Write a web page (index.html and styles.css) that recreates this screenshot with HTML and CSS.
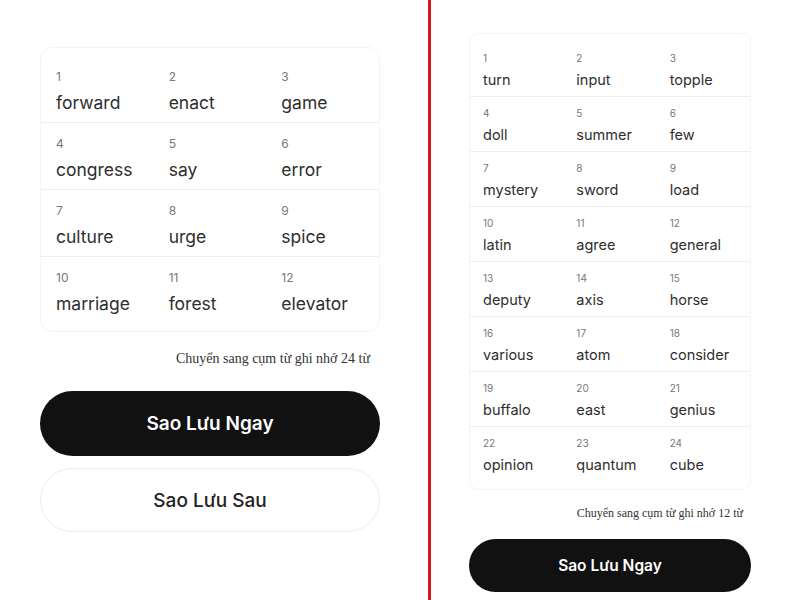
FILE: index.html
```html
<!DOCTYPE html>
<html lang="vi">
<head>
<meta charset="utf-8">
<title>Sao Lưu</title>
<link rel="stylesheet" href="styles.css">
</head>
<body>
<div class="page">
  <section class="panel panel-left">
    <div class="card">
      <div class="row"><div class="cell"><div class="num">1</div><div class="word">forward</div></div><div class="cell"><div class="num">2</div><div class="word">enact</div></div><div class="cell"><div class="num">3</div><div class="word">game</div></div></div>
      <div class="row"><div class="cell"><div class="num">4</div><div class="word">congress</div></div><div class="cell"><div class="num">5</div><div class="word">say</div></div><div class="cell"><div class="num">6</div><div class="word">error</div></div></div>
      <div class="row"><div class="cell"><div class="num">7</div><div class="word">culture</div></div><div class="cell"><div class="num">8</div><div class="word">urge</div></div><div class="cell"><div class="num">9</div><div class="word">spice</div></div></div>
      <div class="row"><div class="cell"><div class="num">10</div><div class="word">marriage</div></div><div class="cell"><div class="num">11</div><div class="word">forest</div></div><div class="cell"><div class="num">12</div><div class="word">elevator</div></div></div>
    </div>
    <div class="switch">Chuyển sang cụm từ ghi nhớ 24 từ</div>
    <button class="btn btn-primary">Sao Lưu Ngay</button>
    <button class="btn btn-secondary">Sao Lưu Sau</button>
  </section>
  <div class="divider"></div>
  <section class="panel panel-right">
    <div class="card">
      <div class="row"><div class="cell"><div class="num">1</div><div class="word">turn</div></div><div class="cell"><div class="num">2</div><div class="word">input</div></div><div class="cell"><div class="num">3</div><div class="word">topple</div></div></div>
      <div class="row"><div class="cell"><div class="num">4</div><div class="word">doll</div></div><div class="cell"><div class="num">5</div><div class="word">summer</div></div><div class="cell"><div class="num">6</div><div class="word">few</div></div></div>
      <div class="row"><div class="cell"><div class="num">7</div><div class="word">mystery</div></div><div class="cell"><div class="num">8</div><div class="word">sword</div></div><div class="cell"><div class="num">9</div><div class="word">load</div></div></div>
      <div class="row"><div class="cell"><div class="num">10</div><div class="word">latin</div></div><div class="cell"><div class="num">11</div><div class="word">agree</div></div><div class="cell"><div class="num">12</div><div class="word">general</div></div></div>
      <div class="row"><div class="cell"><div class="num">13</div><div class="word">deputy</div></div><div class="cell"><div class="num">14</div><div class="word">axis</div></div><div class="cell"><div class="num">15</div><div class="word">horse</div></div></div>
      <div class="row"><div class="cell"><div class="num">16</div><div class="word">various</div></div><div class="cell"><div class="num">17</div><div class="word">atom</div></div><div class="cell"><div class="num">18</div><div class="word">consider</div></div></div>
      <div class="row"><div class="cell"><div class="num">19</div><div class="word">buffalo</div></div><div class="cell"><div class="num">20</div><div class="word">east</div></div><div class="cell"><div class="num">21</div><div class="word">genius</div></div></div>
      <div class="row"><div class="cell"><div class="num">22</div><div class="word">opinion</div></div><div class="cell"><div class="num">23</div><div class="word">quantum</div></div><div class="cell"><div class="num">24</div><div class="word">cube</div></div></div>
    </div>
    <div class="switch">Chuyển sang cụm từ ghi nhớ 12 từ</div>
    <button class="btn btn-primary">Sao Lưu Ngay</button>
  </section>
</div>
</body>
</html>
```
FILE: styles.css
```css
* { box-sizing: border-box; }
html, body { margin: 0; padding: 0; background: #fff; }
body { font-family: Inter, "Noto Sans", Arial, sans-serif; width: 800px; height: 600px; overflow: hidden; }

.page { display: flex; height: 600px; }

.panel { display: flex; flex-direction: column; }

.panel-left { width: 340px; margin-left: 40px; padding-top: 47px; }
.divider { width: 3px; background: #d3171a; margin-left: 48px; height: 600px; }
.panel-right { width: 282px; margin-left: 38px; padding-top: 33px; }

.card {
  border: 1px solid #f4f4f4;
  border-radius: 12px;
  padding: 8px 0;
}
.row {
  display: grid;
  grid-template-columns: 1fr 1fr 1fr;
  border-bottom: 1px solid #eeeeee;
}
.row:last-child { border-bottom: none; }

.num { color: #777; }
.word { color: #2e2e2e; }

.panel-left .row { height: 67px; }
.panel-left .row:last-child { height: 66px; }
.panel-left .cell { padding: 13px 0 0 15px; }
.panel-left .num { font-size: 12px; line-height: 16px; }
.panel-left .word { font-size: 17.5px; line-height: 22px; margin-top: 7px; }

.panel-right .card { border-radius: 10px; }
.panel-right .row { height: 55px; }
.panel-right .row:last-child { height: 54px; }
.panel-right .cell { padding: 9px 0 0 13px; }
.panel-right .num { font-size: 10px; line-height: 14px; }
.panel-right .word { font-size: 14.5px; line-height: 18px; margin-top: 6px; }

.switch {
  font-family: "Liberation Serif", "Times New Roman", serif;
  color: #333;
  text-align: right;
}
.panel-left .switch { font-size: 14px; line-height: 16px; margin-top: 19px; padding-right: 10px; }
.panel-right .switch { font-size: 12px; line-height: 14px; margin-top: 16px; padding-right: 8px; }

.btn {
  display: block;
  width: 100%;
  font-family: Inter, "Noto Sans", Arial, sans-serif;
  border-radius: 40px;
  cursor: pointer;
  padding: 0;
}
.btn-primary { background: #111; color: #fff; border: none; font-weight: 600; }
.btn-secondary { background: #fff; color: #222; border: 1px solid #ededed; font-weight: 500; }

.panel-left .btn { font-size: 19px; }
.panel-left .btn-primary { height: 65px; margin-top: 24px; }
.panel-left .btn-secondary { height: 64px; margin-top: 12px; }

.panel-right .btn { font-size: 15.5px; }
.panel-right .btn-primary { height: 53px; margin-top: 19px; }
```
